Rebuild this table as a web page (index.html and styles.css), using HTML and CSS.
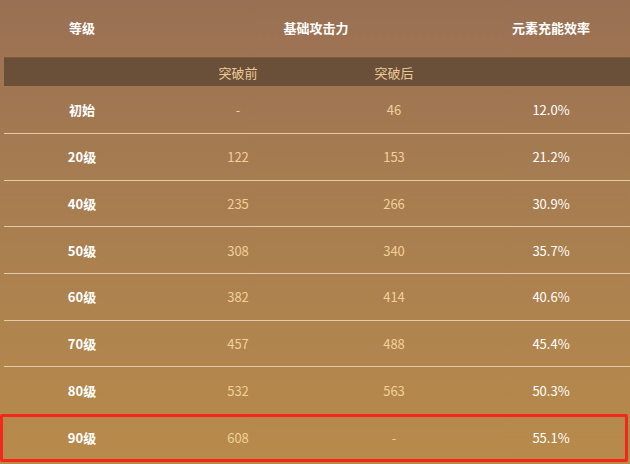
FILE: index.html
```html
<!DOCTYPE html>
<html lang="zh-CN">
<head>
    <meta charset="UTF-8">
    <title>等级属性</title>
    <link rel="stylesheet" href="styles.css">
</head>
<body>
    <div class="stats">
        <div class="row head">
            <div class="cell">等级</div>
            <div class="cell span2">基础攻击力</div>
            <div class="cell">元素充能效率</div>
        </div>
        <div class="row sub">
            <div class="cell"></div>
            <div class="cell">突破前</div>
            <div class="cell">突破后</div>
            <div class="cell"></div>
        </div>
        <div class="row data first">
            <div class="cell lv">初始</div>
            <div class="cell num">-</div>
            <div class="cell num">46</div>
            <div class="cell pct">12.0%</div>
        </div>
        <div class="row data">
            <div class="cell lv">20级</div>
            <div class="cell num">122</div>
            <div class="cell num">153</div>
            <div class="cell pct">21.2%</div>
        </div>
        <div class="row data">
            <div class="cell lv">40级</div>
            <div class="cell num">235</div>
            <div class="cell num">266</div>
            <div class="cell pct">30.9%</div>
        </div>
        <div class="row data">
            <div class="cell lv">50级</div>
            <div class="cell num">308</div>
            <div class="cell num">340</div>
            <div class="cell pct">35.7%</div>
        </div>
        <div class="row data">
            <div class="cell lv">60级</div>
            <div class="cell num">382</div>
            <div class="cell num">414</div>
            <div class="cell pct">40.6%</div>
        </div>
        <div class="row data">
            <div class="cell lv">70级</div>
            <div class="cell num">457</div>
            <div class="cell num">488</div>
            <div class="cell pct">45.4%</div>
        </div>
        <div class="row data before-mark">
            <div class="cell lv">80级</div>
            <div class="cell num">532</div>
            <div class="cell num">563</div>
            <div class="cell pct">50.3%</div>
        </div>
        <div class="row data marked">
            <div class="cell lv">90级</div>
            <div class="cell num">608</div>
            <div class="cell num">-</div>
            <div class="cell pct">55.1%</div>
        </div>
    </div>
</body>
</html>
```

FILE: styles.css
```css
html, body {
    height: 100%;
}

body {
    margin: 0;
    font-family: "Noto Sans CJK SC", "Liberation Sans", sans-serif;
    font-size: 13px;
    color: #fff;
    background: linear-gradient(180deg, #9a7054 0%, #a57b51 35%, #b88b4b 100%);
    overflow: hidden;
}

.stats {
    padding-left: 4px;
}

.row {
    display: grid;
    grid-template-columns: 156px 156px 156px 158px;
    align-items: center;
}

.cell {
    text-align: center;
}

.span2 {
    grid-column: span 2;
}

.head {
    height: 57px;
    font-weight: bold;
}

.head .cell {
    padding-bottom: 2px;
}

.sub {
    height: 28px;
    background-color: #6b5039;
    border-top: 1px solid #7a5a40;
    color: #ecca98;
}

.data {
    height: 45.67px;
    border-bottom: 1px solid #e2cba8;
}

.data.first {
    height: 47px;
}

.lv {
    font-weight: bold;
}

.num {
    color: #f0d099;
}

.pct {
    color: #fff;
}

.before-mark {
    border-bottom-color: transparent;
}

.marked {
    height: 42px;
    margin-left: -4px;
    width: 621px;
    padding-left: 1px;
    border: 3px solid #f3281c;
    border-radius: 2px;
}
```
